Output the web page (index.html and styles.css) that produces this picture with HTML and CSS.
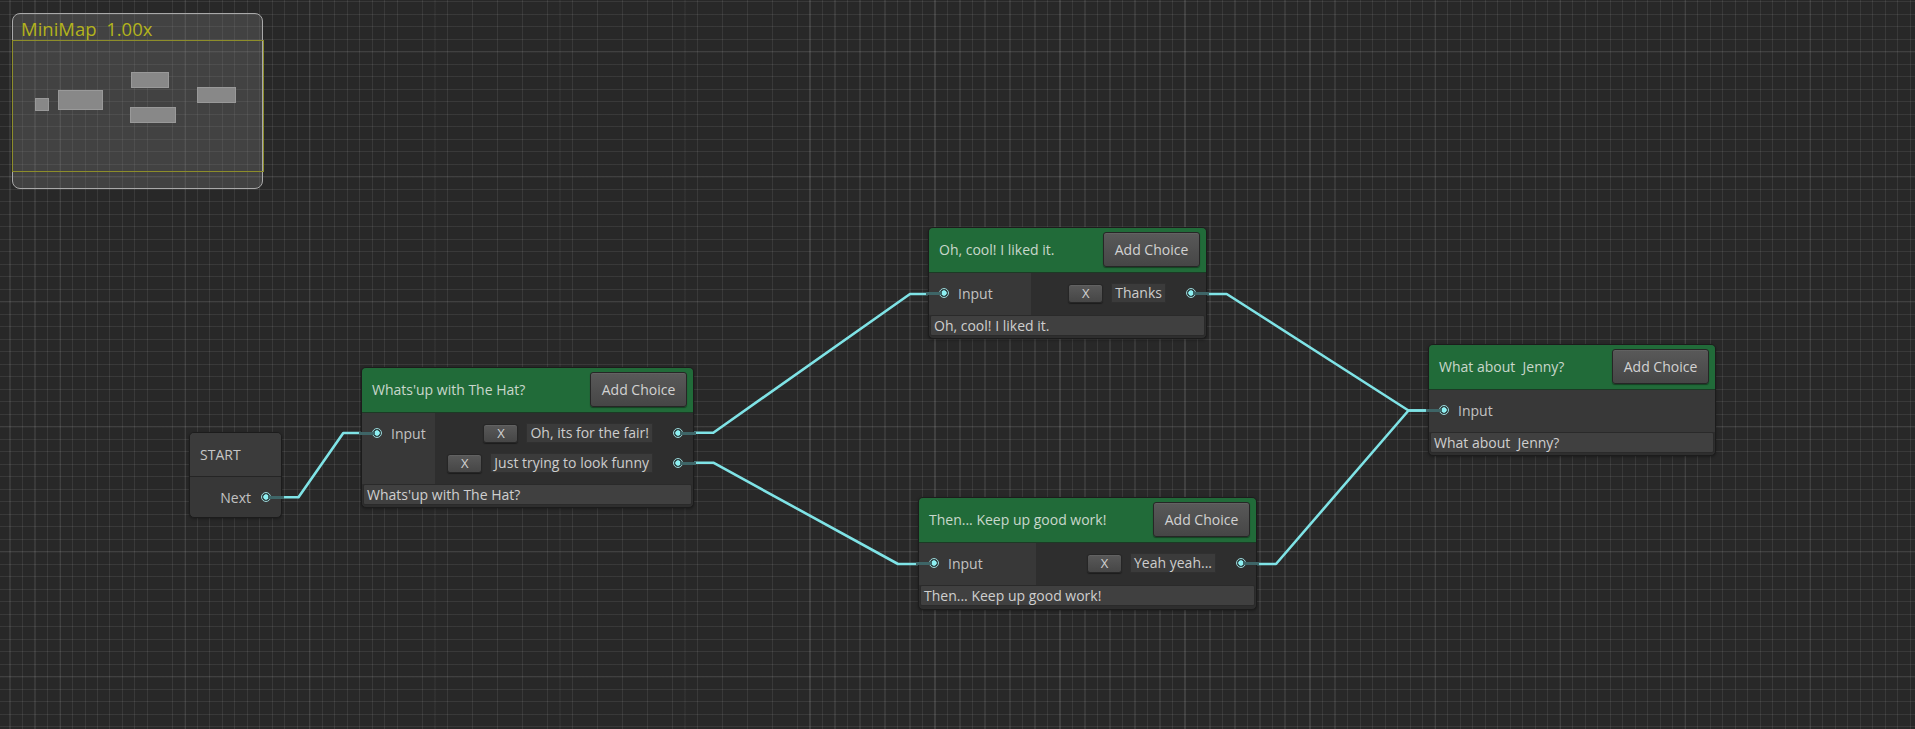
FILE: index.html
```html
<!DOCTYPE html>
<html>
<head>
<meta charset="utf-8">
<link rel="stylesheet" href="styles.css">
</head>
<body>
<div class="canvas">
  <svg class="wires" width="1915" height="729" viewBox="0 0 1915 729">
    <g fill="none" stroke="#7fe3e6" stroke-width="2.6" stroke-linejoin="round" stroke-linecap="round">
      <path d="M266,497.3 H298.5 L343.3,433 H377"/>
      <path d="M678.3,432.7 H713.3 L910,294 H944"/>
      <path d="M678.3,462.7 H713.3 L898,564 H933.3"/>
      <path d="M1191.7,294 H1226.7 L1408.5,410.5 H1443.3"/>
      <path d="M1241,564 H1276 L1408.5,410.5 H1443.3"/>
    </g>
  </svg>

  <div class="minimap">
    <div class="mm-title">MiniMap  1.00x</div>
    <div class="mm-view">
      <span class="mm-rect r1"></span>
      <span class="mm-rect r2"></span>
      <span class="mm-rect r3"></span>
      <span class="mm-rect r4"></span>
      <span class="mm-rect r5"></span>
    </div>
  </div>

  <div class="node start n-start">
    <div class="start-head">START</div>
    <div class="start-body">
      <span class="label">Next</span>
      <span class="port port-out"></span>
    </div>
  </div>

  <div class="node n-whats">
    <div class="node-head">
      <span class="node-title">Whats'up with The Hat?</span>
      <button class="btn btn-add">Add Choice</button>
    </div>
    <div class="node-body">
      <div class="inputs in-whats">
        <div class="in-row"><span class="port port-in"></span><span class="label">Input</span></div>
      </div>
      <div class="choices">
        <div class="choice"><button class="btn btn-x">X</button><span class="field">Oh, its for the fair!</span><span class="port port-out"></span></div>
        <div class="choice"><button class="btn btn-x">X</button><span class="field">Just trying to look funny</span><span class="port port-out"></span></div>
      </div>
    </div>
    <div class="foot">Whats'up with The Hat?</div>
  </div>

  <div class="node n-cool">
    <div class="node-head">
      <span class="node-title">Oh, cool! I liked it.</span>
      <button class="btn btn-add">Add Choice</button>
    </div>
    <div class="node-body">
      <div class="inputs in-cool">
        <div class="in-row"><span class="port port-in"></span><span class="label">Input</span></div>
      </div>
      <div class="choices">
        <div class="choice"><button class="btn btn-x">X</button><span class="field">Thanks</span><span class="port port-out"></span></div>
      </div>
    </div>
    <div class="foot">Oh, cool! I liked it.</div>
  </div>

  <div class="node n-then">
    <div class="node-head">
      <span class="node-title">Then... Keep up good work!</span>
      <button class="btn btn-add">Add Choice</button>
    </div>
    <div class="node-body">
      <div class="inputs in-then">
        <div class="in-row"><span class="port port-in"></span><span class="label">Input</span></div>
      </div>
      <div class="choices">
        <div class="choice"><button class="btn btn-x">X</button><span class="field">Yeah yeah...</span><span class="port port-out"></span></div>
      </div>
    </div>
    <div class="foot">Then... Keep up good work!</div>
  </div>

  <div class="node n-jenny">
    <div class="node-head">
      <span class="node-title">What about  Jenny?</span>
      <button class="btn btn-add">Add Choice</button>
    </div>
    <div class="node-body">
      <div class="inputs in-full">
        <div class="in-row"><span class="port port-in"></span><span class="label">Input</span></div>
      </div>
    </div>
    <div class="foot">What about  Jenny?</div>
  </div>
</div>
</body>
</html>
```
FILE: styles.css
```css
* { box-sizing: border-box; }
html, body { margin: 0; padding: 0; background: #282828; }
body { font-family: "Open Sans", "Noto Sans", sans-serif; font-size: 14px; color: #c8c8c8; }

.canvas {
  position: relative;
  width: 1915px;
  height: 729px;
  overflow: hidden;
  background-color: #282828;
  background-image:
    repeating-linear-gradient(to right, transparent 0 59px, rgba(255,255,255,0.035) 59px 61px, transparent 61px 125px),
    repeating-linear-gradient(to bottom, transparent 0 50.7px, rgba(255,255,255,0.035) 50.7px 52.7px, transparent 52.7px 125px),
    repeating-linear-gradient(to right, transparent 0 9.5px, rgba(255,255,255,0.08) 9.5px 10.5px, transparent 10.5px 12.5px),
    repeating-linear-gradient(to bottom, transparent 0 1.2px, rgba(255,255,255,0.08) 1.2px 2.2px, transparent 2.2px 12.5px);
}

.wires { position: absolute; left: 0; top: 0; }

/* Minimap */
.minimap {
  position: absolute;
  left: 12px;
  top: 13px;
  width: 251px;
  height: 176px;
  border: 1.5px solid #a9a9a9;
  border-radius: 8px;
  background: rgba(120,120,120,0.33);
  display: flex;
  flex-direction: column;
}
.mm-title {
  height: 26px;
  padding: 4px 0 0 8px;
  font-size: 18.5px;
  line-height: 22px;
  color: #b3b31c;
  white-space: pre;
}
.mm-view {
  position: relative;
  height: 132px;
  margin: 0 -1.5px;
  border: 1.5px solid #8d8d2a;
}
.mm-rect {
  position: absolute;
  background: #888;
  border: 1px solid #999;
}
.r1 { left: 22px; top: 57px; width: 14px; height: 13px; }
.r2 { left: 45px; top: 49px; width: 45px; height: 20px; }
.r3 { left: 118px; top: 31px; width: 38px; height: 16px; }
.r4 { left: 117px; top: 66px; width: 46px; height: 16px; }
.r5 { left: 184px; top: 46px; width: 39px; height: 16px; }

/* Nodes */
.node {
  position: absolute;
  display: flex;
  flex-direction: column;
  border: 1px solid #1c1c1c;
  border-radius: 5px;
  background: #2e2e2e;
  box-shadow: 0 1px 3px rgba(0,0,0,0.35);
}
.n-start { left: 189px; top: 432px; width: 93px; height: 86px; }
.n-whats { left: 361px; top: 367px; width: 333px; height: 141px; }
.n-cool  { left: 928px; top: 227px; width: 279px; height: 112px; }
.n-then  { left: 918px; top: 497px; width: 339px; height: 113px; }
.n-jenny { left: 1428px; top: 344px; width: 288px; height: 112px; }

.start { background: #373737; }
.start-head {
  height: 44px;
  padding-left: 10px;
  display: flex;
  align-items: center;
  background: #3b3b3b;
  border-bottom: 1px solid #252525;
  border-radius: 4px 4px 0 0;
  color: #c6c6c6;
}
.start-body {
  flex: 1;
  display: flex;
  align-items: center;
  justify-content: flex-end;
  gap: 10px;
  padding-right: 10px;
  border-radius: 0 0 4px 4px;
}

.node-head {
  height: 45px;
  flex: none;
  display: flex;
  align-items: center;
  justify-content: space-between;
  padding: 0 6px 2px 10px;
  background: #216b39;
  border-radius: 4px 4px 0 0;
  border-bottom: 1px solid #1c3a25;
}
.node-title { color: #c9d7cc; white-space: pre; }

.btn {
  font-family: inherit;
  color: #d2d2d2;
  background: linear-gradient(#595959, #464646);
  border: 1px solid #262626;
  border-radius: 3px;
  box-shadow: 0 1px 1px rgba(0,0,0,0.4), inset 0 1px 0 rgba(255,255,255,0.06);
  padding: 0;
  margin: 0;
  display: flex;
  align-items: center;
  justify-content: center;
}
.btn-add { width: 97px; height: 35px; font-size: 14px; }
.btn-x { width: 35px; height: 19px; font-size: 13px; margin-right: 8px; }

.node-body {
  height: 71px;
  flex: none;
  display: flex;
}
.n-cool .node-body, .n-then .node-body, .n-jenny .node-body { height: 42px; }

.inputs {
  background: #383838;
  padding-top: 10px;
}
.in-whats { width: 73px; }
.in-cool { width: 102px; }
.in-then { width: 117px; }
.in-full { flex: 1; }

.in-row {
  height: 20px;
  display: flex;
  align-items: center;
  padding-left: 10px;
  gap: 9px;
}

.choices {
  flex: 1;
  display: flex;
  flex-direction: column;
  gap: 10px;
  padding: 10px 10px 0 0;
}
.choice {
  height: 20px;
  display: flex;
  align-items: center;
  justify-content: flex-end;
}
.field {
  height: 20px;
  line-height: 18px;
  padding: 0 3px;
  background: #3b3b3b;
  border: 1px solid #303030;
  white-space: pre;
  margin-right: 20px;
  color: #cdcdcd;
}

.foot {
  height: 21px;
  line-height: 19px;
  margin: 0 1px 2px;
  padding: 0 3px;
  background: #404040;
  border: 1px solid #2a2a2a;
  border-radius: 2px;
  white-space: pre;
  color: #cfcfcf;
}

.label { color: #c2c2c2; }

.port {
  position: relative;
  flex: none;
  width: 10px;
  height: 10px;
  border-radius: 50%;
  border: 1px solid #9ad6d8;
  background: radial-gradient(circle, #8ef0f2 0 2.4px, #2a3b3c 3px);
  z-index: 1;
}
.port::before {
  content: "";
  position: absolute;
  top: 2.5px;
  width: 16px;
  height: 3px;
  background: #3e6567;
  z-index: -1;
}
.port-in::before { right: 6px; }
.port-out::before { left: 6px; }
```
